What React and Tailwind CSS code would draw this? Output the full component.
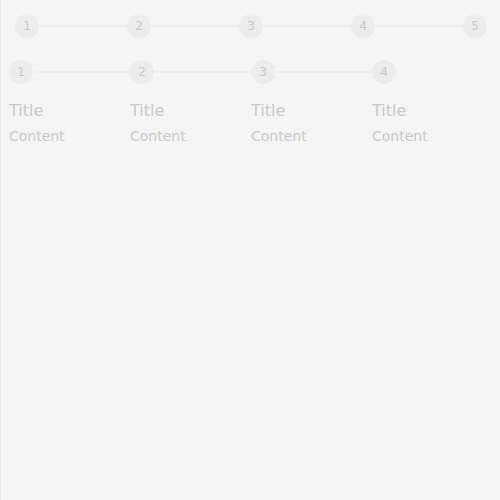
export default function App() {
  const font = { fontFamily: '"DejaVu Sans", sans-serif' };
  const Circle = ({ n }) => (
    <div className="w-6 h-6 shrink-0 rounded-full bg-[#ececec] flex items-center justify-center text-[12px] text-[#c8c8c8]">
      {n}
    </div>
  );
  return (
    <div className="min-h-screen bg-[#f5f5f5] border-l border-[#e6e6e6]" style={font}>
      <div className="pt-[14px] pl-[14px]">
        <div className="w-[472px] flex items-center">
          {[1, 2, 3, 4, 5].map((n, i) => (
            <div key={n} className={i < 4 ? "flex items-center flex-1" : "flex items-center"}>
              <Circle n={n} />
              {i < 4 && <div className="flex-1 h-[2px] bg-[#eeeeee]" />}
            </div>
          ))}
        </div>
      </div>
      <div className="mt-[22px] pl-[8px] grid grid-cols-[121px_121px_121px_121px]">
        {[1, 2, 3, 4].map((n, i) => (
          <div key={n} className="flex flex-col">
            <div className="flex items-center">
              <Circle n={n} />
              {i < 3 && <div className="flex-1 h-[2px] bg-[#eeeeee]" />}
            </div>
            <div className="mt-[15px] text-[16px] leading-[24px] text-[#c8c8c8]">Title</div>
            <div className="mt-[2px] text-[14px] leading-[22px] text-[#c8c8c8]">Content</div>
          </div>
        ))}
      </div>
    </div>
  );
}
